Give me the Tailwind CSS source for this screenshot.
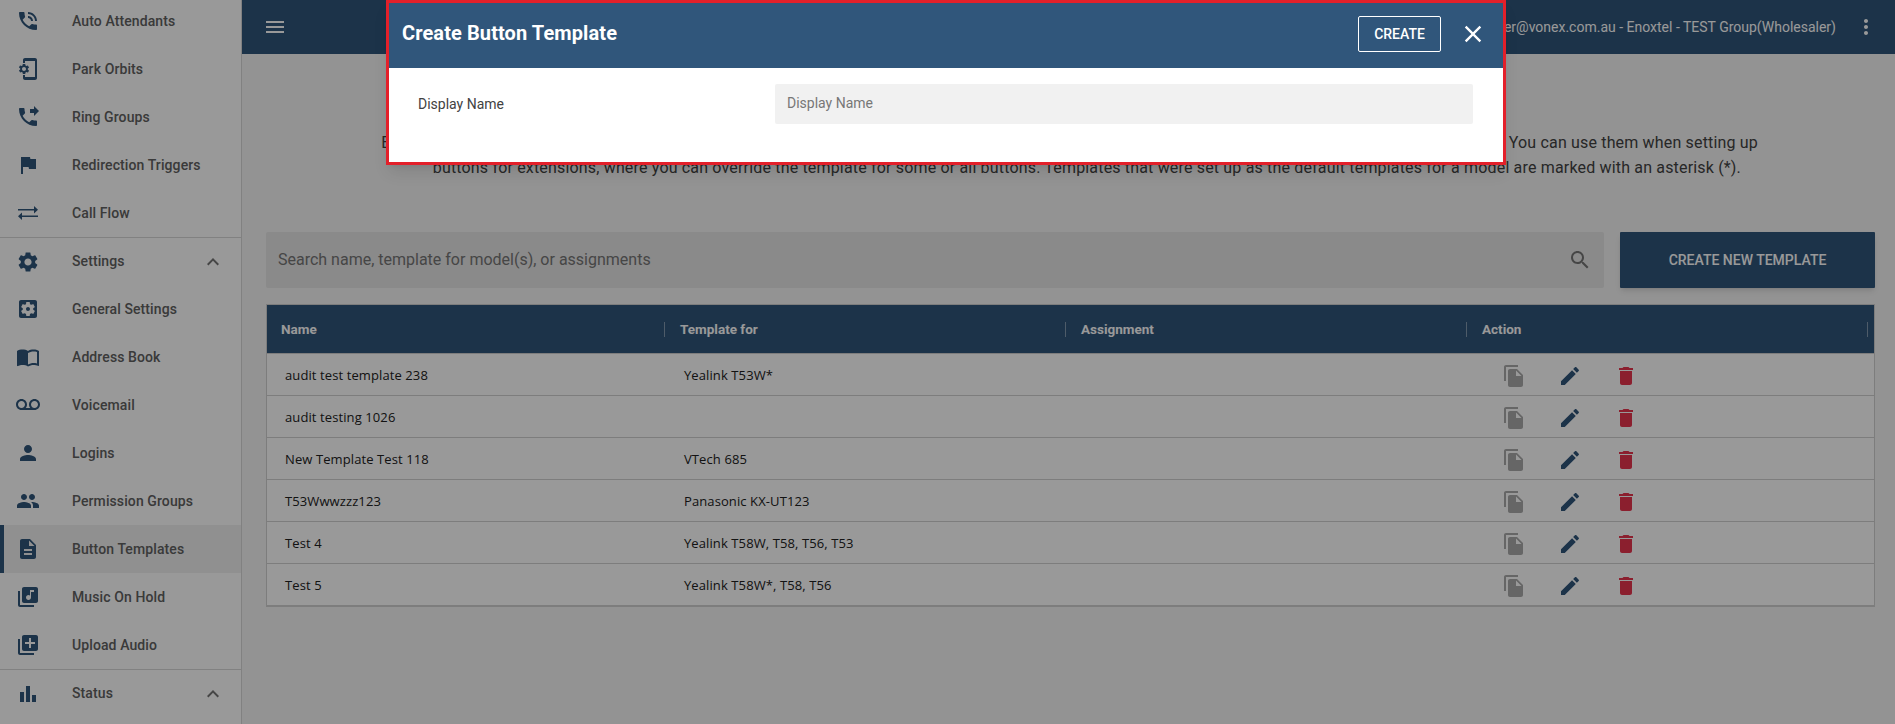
<!DOCTYPE html>
<html lang="en">
<head>
<meta charset="utf-8">
<title>Button Templates</title>
<script src="https://cdn.jsdelivr.net/npm/@tailwindcss/browser@4"></script>
</head>
<body class="font-['Roboto',sans-serif]">
<div class="flex h-[724px] w-full overflow-hidden bg-[#f5f5f5] relative">
  <aside class="w-[242px] h-full shrink-0 bg-white border-r border-[#d8d8d8] overflow-hidden text-[14px] font-medium tracking-[0.1px] text-[#616161]">
    <nav class="-mt-[3px]">
      <a class="flex items-center h-12 pl-4"><svg viewBox="0 0 24 24" class="w-6 h-6 fill-[#30567b] mr-8"><path d="M20 15.5c-1.25 0-2.45-.2-3.57-.57-.35-.11-.74-.03-1.02.24l-2.2 2.2c-2.83-1.44-5.15-3.75-6.59-6.59l2.2-2.21c.28-.26.36-.65.25-1C8.7 6.45 8.5 5.25 8.5 4c0-.55-.45-1-1-1H4c-.55 0-1 .45-1 1 0 9.39 7.61 17 17 17 .55 0 1-.45 1-1v-3.5c0-.55-.45-1-1-1zM19 12h2c0-4.97-4.03-9-9-9v2c3.87 0 7 3.13 7 7zm-4 0h2c0-2.76-2.24-5-5-5v2c1.66 0 3 1.34 3 3z"/></svg>Auto Attendants</a>
      <a class="flex items-center h-12 pl-4"><svg viewBox="0 0 24 24" class="w-6 h-6 fill-[#30567b] mr-8"><path d="M11.8 12.5v-1l1.1-.8c.1-.1.1-.2.1-.3l-1-1.7c-.1-.1-.2-.2-.3-.1l-1.3.4c-.3-.2-.6-.4-.9-.5l-.2-1.3c0-.1-.1-.2-.3-.2H7c-.1 0-.2.1-.3.2l-.2 1.3c-.3.1-.6.3-.9.5l-1.3-.5c-.1 0-.2 0-.3.1l-1 1.7c-.1.1 0 .2.1.3l1.1.8v1l-1.1.8c-.1.2-.1.3-.1.4l1 1.7c.1.1.2.2.3.1l1.4-.4c.3.2.6.4.9.5l.2 1.3c-.1.1.1.2.2.2h2c.1 0 .2-.1.3-.2l.2-1.3c.3-.1.6-.3.9-.5l1.3.5c.1 0 .2 0 .3-.1l1-1.7c.1-.1 0-.2-.1-.3l-1.1-.9zM8 14c-1.1 0-2-.9-2-2s.9-2 2-2 2 .9 2 2-.9 2-2 2zM19 1H9c-1.1 0-2 .9-2 2v3h2V4h10v16H9v-2H7v3c0 1.1.9 2 2 2h10c1.1 0 2-.9 2-2V3c0-1.1-.9-2-2-2z"/></svg>Park Orbits</a>
      <a class="flex items-center h-12 pl-4"><svg viewBox="0 0 24 24" class="w-6 h-6 fill-[#30567b] mr-8"><path d="M18 11l5-5-5-5v3h-4v4h4v3zm2 4.5c-1.25 0-2.45-.2-3.57-.57-.35-.11-.74-.03-1.02.24l-2.2 2.2c-2.83-1.44-5.15-3.75-6.59-6.59l2.2-2.21c.28-.26.36-.65.25-1C8.7 6.45 8.5 5.25 8.5 4c0-.55-.45-1-1-1H4c-.55 0-1 .45-1 1 0 9.39 7.61 17 17 17 .55 0 1-.45 1-1v-3.5c0-.55-.45-1-1-1z"/></svg>Ring Groups</a>
      <a class="flex items-center h-12 pl-4"><svg viewBox="0 0 24 24" class="w-6 h-6 fill-[#30567b] mr-8"><path d="M14.4 6L14 4H5v17h2v-7h5.6l.4 2h7V6z"/></svg>Redirection Triggers</a>
      <a class="flex items-center h-12 pl-4"><svg viewBox="0 0 24 24" class="w-6 h-6 fill-[#30567b] mr-8"><path d="M18 5v3H2v1.6h16v3l4-3.8zM6 11.4l-4 3.8L6 19v-3h16v-1.6H6z"/></svg>Call Flow</a>
      <a class="flex items-center h-12 pl-4 pr-[16px] border-t border-[#d8d8d8]"><svg viewBox="0 0 24 24" class="w-6 h-6 fill-[#30567b] mr-8"><path d="M19.14 12.94c.04-.3.06-.61.06-.94 0-.32-.02-.64-.07-.94l2.03-1.58c.18-.14.23-.41.12-.61l-1.92-3.32c-.12-.22-.37-.29-.59-.22l-2.39.96c-.5-.38-1.03-.7-1.62-.94l-.36-2.54c-.04-.24-.24-.41-.48-.41h-3.84c-.24 0-.43.17-.47.41l-.36 2.54c-.59.24-1.13.57-1.62.94l-2.39-.96c-.22-.08-.47 0-.59.22L2.74 8.87c-.12.21-.08.47.12.61l2.03 1.58c-.05.3-.09.63-.09.94s.02.64.07.94l-2.03 1.58c-.18.14-.23.41-.12.61l1.92 3.32c.12.22.37.29.59.22l2.39-.96c.5.38 1.03.7 1.62.94l.36 2.54c.05.24.24.41.48.41h3.84c.24 0 .44-.17.47-.41l.36-2.54c.59-.24 1.13-.56 1.62-.94l2.39.96c.22.08.47 0 .59-.22l1.92-3.32c.12-.22.07-.47-.12-.61l-2.01-1.58zM12 15.6c-1.98 0-3.6-1.62-3.6-3.6s1.62-3.6 3.6-3.6 3.6 1.62 3.6 3.6-1.62 3.6-3.6 3.6z"/></svg><span class="flex-1">Settings</span><svg viewBox="0 0 24 24" class="w-6 h-6 fill-[#757575]"><path d="M12 8l-6 6 1.41 1.41L12 10.83l4.59 4.58L18 14z"/></svg></a>
      <a class="flex items-center h-12 pl-4"><svg viewBox="0 0 24 24" class="w-6 h-6 fill-[#30567b] mr-8"><path d="M12 10c-1.1 0-2 .9-2 2s.9 2 2 2 2-.9 2-2-.9-2-2-2zm7-7H5c-1.11 0-2 .9-2 2v14c0 1.1.89 2 2 2h14c1.11 0 2-.9 2-2V5c0-1.1-.89-2-2-2zm-1.75 9c0 .23-.02.46-.05.68l1.48 1.16c.13.11.17.3.08.45l-1.4 2.42c-.09.15-.27.21-.43.15l-1.74-.7c-.36.28-.76.51-1.18.69l-.26 1.85c-.03.17-.18.3-.35.3h-2.8c-.17 0-.32-.13-.35-.29l-.26-1.85c-.43-.18-.82-.41-1.18-.69l-1.74.7c-.16.06-.34 0-.43-.15l-1.4-2.42c-.09-.15-.05-.34.08-.45l1.48-1.16c-.03-.23-.05-.46-.05-.69 0-.23.02-.46.05-.68l-1.48-1.16c-.13-.11-.17-.3-.08-.45l1.4-2.42c.09-.15.27-.21.43-.15l1.74.7c.36-.28.76-.51 1.18-.69l.26-1.85c.03-.17.18-.3.35-.3h2.8c.17 0 .32.13.35.29l.26 1.85c.43.18.82.41 1.18.69l1.74-.7c.16-.06.34 0 .43.15l1.4 2.42c.09.15.05.34-.08.45l-1.48 1.16c.03.23.05.46.05.69z"/></svg>General Settings</a>
      <a class="flex items-center h-12 pl-4"><svg viewBox="0 0 24 24" class="w-6 h-6 fill-[#30567b] mr-8"><path d="M21 5c-1.11-.35-2.33-.5-3.5-.5-1.95 0-4.05.4-5.5 1.5-1.45-1.1-3.55-1.5-5.5-1.5S2.45 4.9 1 6v14.65c0 .25.25.5.5.5.1 0 .15-.05.25-.05C3.1 20.45 5.05 20 6.5 20c1.95 0 4.05.4 5.5 1.5 1.35-.85 3.8-1.5 5.5-1.5 1.65 0 3.35.3 4.75 1.05.1.05.15.05.25.05.25 0 .5-.25.5-.5V6c-.6-.45-1.25-.75-2-1zm0 13.5c-1.1-.35-2.3-.5-3.5-.5-1.7 0-4.15.65-5.5 1.5V8c1.35-.85 3.8-1.5 5.5-1.5 1.2 0 2.4.15 3.5.5v11.5z"/></svg>Address Book</a>
      <a class="flex items-center h-12 pl-4"><svg viewBox="0 0 24 24" class="w-6 h-6 fill-[#30567b] mr-8"><path d="M18.5 6C15.46 6 13 8.46 13 11.5c0 1.33.47 2.55 1.26 3.5H9.74c.79-.95 1.26-2.17 1.26-3.5C11 8.46 8.54 6 5.5 6S0 8.46 0 11.5 2.46 17 5.5 17h13c3.04 0 5.5-2.46 5.5-5.5S21.54 6 18.5 6zm-13 9C3.57 15 2 13.43 2 11.5S3.57 8 5.5 8 9 9.57 9 11.5 7.43 15 5.5 15zm13 0c-1.93 0-3.5-1.57-3.5-3.5S16.57 8 18.5 8 22 9.57 22 11.5 20.43 15 18.5 15z"/></svg>Voicemail</a>
      <a class="flex items-center h-12 pl-4"><svg viewBox="0 0 24 24" class="w-6 h-6 fill-[#30567b] mr-8"><path d="M12 12c2.21 0 4-1.79 4-4s-1.79-4-4-4-4 1.79-4 4 1.79 4 4 4zm0 2c-2.67 0-8 1.34-8 4v2h16v-2c0-2.66-5.33-4-8-4z"/></svg>Logins</a>
      <a class="flex items-center h-12 pl-4"><svg viewBox="0 0 24 24" class="w-6 h-6 fill-[#30567b] mr-8"><path d="M16 11c1.66 0 2.99-1.34 2.99-3S17.66 5 16 5c-1.66 0-3 1.34-3 3s1.34 3 3 3zm-8 0c1.66 0 2.99-1.34 2.99-3S9.66 5 8 5C6.34 5 5 6.34 5 8s1.34 3 3 3zm0 2c-2.33 0-7 1.17-7 3.5V19h14v-2.5c0-2.33-4.67-3.5-7-3.5zm8 0c-.29 0-.62.02-.97.05 1.16.84 1.97 1.97 1.97 3.45V19h6v-2.5c0-2.33-4.67-3.5-7-3.5z"/></svg>Permission Groups</a>
      <a class="flex items-center h-12 pl-[12px] border-l-4 border-[#30567b] bg-[#f0f0f0]"><svg viewBox="0 0 24 24" class="w-6 h-6 fill-[#30567b] mr-8"><path d="M14 2H6c-1.1 0-1.99.9-1.99 2L4 20c0 1.1.89 2 1.99 2H18c1.1 0 2-.9 2-2V8l-6-6zm2 16H8v-2h8v2zm0-4H8v-2h8v2zm-3-5V3.5L18.5 9H13z"/></svg>Button Templates</a>
      <a class="flex items-center h-12 pl-4"><svg viewBox="0 0 24 24" class="w-6 h-6 fill-[#30567b] mr-8"><path d="M20 2H8c-1.1 0-2 .9-2 2v12c0 1.1.9 2 2 2h12c1.1 0 2-.9 2-2V4c0-1.1-.9-2-2-2zm-2 5h-3v5.5c0 1.38-1.12 2.5-2.5 2.5S10 13.88 10 12.5s1.12-2.5 2.5-2.5c.57 0 1.08.19 1.5.51V5h4v2zM4 6H2v14c0 1.1.9 2 2 2h14v-2H4V6z"/></svg>Music On Hold</a>
      <a class="flex items-center h-12 pl-4"><svg viewBox="0 0 24 24" class="w-6 h-6 fill-[#30567b] mr-8"><path d="M4 6H2v14c0 1.1.9 2 2 2h14v-2H4V6zm16-4H8c-1.1 0-2 .9-2 2v12c0 1.1.9 2 2 2h12c1.1 0 2-.9 2-2V4c0-1.1-.9-2-2-2zm-1 9h-4v4h-2v-4H9V9h4V5h2v4h4v2z"/></svg>Upload Audio</a>
      <a class="flex items-center h-12 pl-4 pr-[16px] border-t border-[#d8d8d8]"><svg viewBox="0 0 24 24" class="w-6 h-6 fill-[#30567b] mr-8"><path d="M4 10h4v10H4zM10 4h4v16h-4zM16 13h4v7h-4z"/></svg><span class="flex-1">Status</span><svg viewBox="0 0 24 24" class="w-6 h-6 fill-[#757575]"><path d="M12 8l-6 6 1.41 1.41L12 10.83l4.59 4.58L18 14z"/></svg></a>
    </nav>
  </aside>

  <main class="flex-1 min-w-0">
    <header class="h-[54px] bg-[#30567b] flex items-center justify-between pl-[21px] pr-[17px] text-white">
      <svg viewBox="0 0 24 24" class="w-6 h-6 fill-white"><path d="M3 18h18v-2H3v2zm0-5h18v-2H3v2zm0-7v2h18V6H3z"/></svg>
      <div class="flex items-center gap-[18px] text-[14px]">
        <span>superuser@vonex.com.au - Enoxtel - TEST Group(Wholesaler)</span>
        <svg viewBox="0 0 24 24" class="w-6 h-6 fill-white"><path d="M12 8c1.1 0 2-.9 2-2s-.9-2-2-2-2 .9-2 2 .9 2 2 2zm0 2c-1.1 0-2 .9-2 2s.9 2 2 2 2-.9 2-2-.9-2-2-2zm0 6c-1.1 0-2 .9-2 2s.9 2 2 2 2-.9 2-2-.9-2-2-2z"/></svg>
      </div>
    </header>
    <div class="pl-6 pr-5 pt-[76px]">
      <p class="text-right text-[16px] leading-[25px] tracking-[0.17px] text-[#424242] pr-[117px]">Button templates define how the buttons on a phone model are set out, so that the same layout can be applied again to any number of phones in the group. You can use them when setting up<br><span class="inline-block mr-[17px]">buttons for extensions, where you can override the template for some or all buttons. Templates that were set up as the default templates for a model are marked with an asterisk (*).</span></p>
      <div class="flex gap-4 mt-[52px]">
        <div class="flex-1 h-14 bg-[#e6e6e6] rounded-[2px] flex items-center justify-between pl-3 pr-[12px]">
          <span class="text-[16px] text-[#757575]">Search name, template for model(s), or assignments</span>
          <svg viewBox="0 0 24 24" class="w-6 h-6 fill-[#757575]"><path d="M15.5 14h-.79l-.28-.27C15.41 12.59 16 11.11 16 9.5 16 5.91 13.09 3 9.5 3S3 5.91 3 9.5 5.91 16 9.5 16c1.61 0 3.09-.59 4.23-1.57l.27.28v.79l5 4.99L20.49 19l-4.99-5zm-6 0C7.01 14 5 11.99 5 9.5S7.01 5 9.5 5 14 7.01 14 9.5 11.99 14 9.5 14z"/></svg>
        </div>
        <button class="w-[255px] h-14 bg-[#30567b] text-white text-[14px] font-medium shadow-md rounded-[1px]">CREATE NEW TEMPLATE</button>
      </div>
      <div class="mt-4 border border-[#d0d0d0] border-b-2 bg-white">
        <div class="grid grid-cols-[398px_401px_401px_1fr] h-[48px] bg-[#30567b] text-white text-[13.5px] font-bold items-center">
          <div class="pl-[14px] border-r border-white/40 h-[15px] leading-[15px]">Name</div>
          <div class="pl-[15px] border-r border-white/40 h-[15px] leading-[15px]">Template for</div>
          <div class="pl-[15px] border-r border-white/40 h-[15px] leading-[15px]">Assignment</div>
          <div class="pl-[15px] border-r border-white/40 h-[15px] leading-[15px] mr-[6px]">Action</div>
        </div>
        <div class="grid grid-cols-[398px_401px_401px_1fr] h-[42px] pt-[2px] items-center text-[13px] tracking-[0.1px] font-['Open_Sans',sans-serif] text-[#212121] border-t border-[#d0d0d0]">
          <div class="pl-[18px]">audit test template 238</div>
          <div class="pl-[19px]">Yealink T53W*</div>
          <div></div>
          <div class="flex items-center gap-8 pl-[35px]">
            <svg viewBox="0 0 24 24" class="w-6 h-6 fill-[#aaaaaa]"><path d="M16 1H4c-1.1 0-2 .9-2 2v14h2V3h12V1zm-1 4l6 6v10c0 1.1-.9 2-2 2H7.99C6.89 23 6 22.1 6 21l.01-14c0-1.1.89-2 1.99-2h7zm-1 7h5.5L14 6.5V12z"/></svg>
            <svg viewBox="0 0 24 24" class="w-6 h-6 fill-[#30567b]"><path d="M3 17.25V21h3.75L17.81 9.94l-3.75-3.75L3 17.25zM20.71 7.04c.39-.39.39-1.02 0-1.41l-2.34-2.34c-.39-.39-1.02-.39-1.41 0l-1.83 1.83 3.75 3.75 1.83-1.83z"/></svg>
            <svg viewBox="0 0 24 24" class="w-6 h-6 fill-[#e8344e]"><path d="M6 19c0 1.1.9 2 2 2h8c1.1 0 2-.9 2-2V7H6v12zM19 4h-3.5l-1-1h-5l-1 1H5v2h14V4z"/></svg>
          </div>
        </div>
        <div class="grid grid-cols-[398px_401px_401px_1fr] h-[42px] pt-[2px] items-center text-[13px] tracking-[0.1px] font-['Open_Sans',sans-serif] text-[#212121] border-t border-[#d0d0d0]">
          <div class="pl-[18px]">audit testing 1026</div>
          <div class="pl-[19px]"></div>
          <div></div>
          <div class="flex items-center gap-8 pl-[35px]">
            <svg viewBox="0 0 24 24" class="w-6 h-6 fill-[#aaaaaa]"><path d="M16 1H4c-1.1 0-2 .9-2 2v14h2V3h12V1zm-1 4l6 6v10c0 1.1-.9 2-2 2H7.99C6.89 23 6 22.1 6 21l.01-14c0-1.1.89-2 1.99-2h7zm-1 7h5.5L14 6.5V12z"/></svg>
            <svg viewBox="0 0 24 24" class="w-6 h-6 fill-[#30567b]"><path d="M3 17.25V21h3.75L17.81 9.94l-3.75-3.75L3 17.25zM20.71 7.04c.39-.39.39-1.02 0-1.41l-2.34-2.34c-.39-.39-1.02-.39-1.41 0l-1.83 1.83 3.75 3.75 1.83-1.83z"/></svg>
            <svg viewBox="0 0 24 24" class="w-6 h-6 fill-[#e8344e]"><path d="M6 19c0 1.1.9 2 2 2h8c1.1 0 2-.9 2-2V7H6v12zM19 4h-3.5l-1-1h-5l-1 1H5v2h14V4z"/></svg>
          </div>
        </div>
        <div class="grid grid-cols-[398px_401px_401px_1fr] h-[42px] pt-[2px] items-center text-[13px] tracking-[0.1px] font-['Open_Sans',sans-serif] text-[#212121] border-t border-[#d0d0d0]">
          <div class="pl-[18px]">New Template Test 118</div>
          <div class="pl-[19px]">VTech 685</div>
          <div></div>
          <div class="flex items-center gap-8 pl-[35px]">
            <svg viewBox="0 0 24 24" class="w-6 h-6 fill-[#aaaaaa]"><path d="M16 1H4c-1.1 0-2 .9-2 2v14h2V3h12V1zm-1 4l6 6v10c0 1.1-.9 2-2 2H7.99C6.89 23 6 22.1 6 21l.01-14c0-1.1.89-2 1.99-2h7zm-1 7h5.5L14 6.5V12z"/></svg>
            <svg viewBox="0 0 24 24" class="w-6 h-6 fill-[#30567b]"><path d="M3 17.25V21h3.75L17.81 9.94l-3.75-3.75L3 17.25zM20.71 7.04c.39-.39.39-1.02 0-1.41l-2.34-2.34c-.39-.39-1.02-.39-1.41 0l-1.83 1.83 3.75 3.75 1.83-1.83z"/></svg>
            <svg viewBox="0 0 24 24" class="w-6 h-6 fill-[#e8344e]"><path d="M6 19c0 1.1.9 2 2 2h8c1.1 0 2-.9 2-2V7H6v12zM19 4h-3.5l-1-1h-5l-1 1H5v2h14V4z"/></svg>
          </div>
        </div>
        <div class="grid grid-cols-[398px_401px_401px_1fr] h-[42px] pt-[2px] items-center text-[13px] tracking-[0.1px] font-['Open_Sans',sans-serif] text-[#212121] border-t border-[#d0d0d0]">
          <div class="pl-[18px]">T53Wwwzzz123</div>
          <div class="pl-[19px]">Panasonic KX-UT123</div>
          <div></div>
          <div class="flex items-center gap-8 pl-[35px]">
            <svg viewBox="0 0 24 24" class="w-6 h-6 fill-[#aaaaaa]"><path d="M16 1H4c-1.1 0-2 .9-2 2v14h2V3h12V1zm-1 4l6 6v10c0 1.1-.9 2-2 2H7.99C6.89 23 6 22.1 6 21l.01-14c0-1.1.89-2 1.99-2h7zm-1 7h5.5L14 6.5V12z"/></svg>
            <svg viewBox="0 0 24 24" class="w-6 h-6 fill-[#30567b]"><path d="M3 17.25V21h3.75L17.81 9.94l-3.75-3.75L3 17.25zM20.71 7.04c.39-.39.39-1.02 0-1.41l-2.34-2.34c-.39-.39-1.02-.39-1.41 0l-1.83 1.83 3.75 3.75 1.83-1.83z"/></svg>
            <svg viewBox="0 0 24 24" class="w-6 h-6 fill-[#e8344e]"><path d="M6 19c0 1.1.9 2 2 2h8c1.1 0 2-.9 2-2V7H6v12zM19 4h-3.5l-1-1h-5l-1 1H5v2h14V4z"/></svg>
          </div>
        </div>
        <div class="grid grid-cols-[398px_401px_401px_1fr] h-[42px] pt-[2px] items-center text-[13px] tracking-[0.1px] font-['Open_Sans',sans-serif] text-[#212121] border-t border-[#d0d0d0]">
          <div class="pl-[18px]">Test 4</div>
          <div class="pl-[19px]">Yealink T58W, T58, T56, T53</div>
          <div></div>
          <div class="flex items-center gap-8 pl-[35px]">
            <svg viewBox="0 0 24 24" class="w-6 h-6 fill-[#aaaaaa]"><path d="M16 1H4c-1.1 0-2 .9-2 2v14h2V3h12V1zm-1 4l6 6v10c0 1.1-.9 2-2 2H7.99C6.89 23 6 22.1 6 21l.01-14c0-1.1.89-2 1.99-2h7zm-1 7h5.5L14 6.5V12z"/></svg>
            <svg viewBox="0 0 24 24" class="w-6 h-6 fill-[#30567b]"><path d="M3 17.25V21h3.75L17.81 9.94l-3.75-3.75L3 17.25zM20.71 7.04c.39-.39.39-1.02 0-1.41l-2.34-2.34c-.39-.39-1.02-.39-1.41 0l-1.83 1.83 3.75 3.75 1.83-1.83z"/></svg>
            <svg viewBox="0 0 24 24" class="w-6 h-6 fill-[#e8344e]"><path d="M6 19c0 1.1.9 2 2 2h8c1.1 0 2-.9 2-2V7H6v12zM19 4h-3.5l-1-1h-5l-1 1H5v2h14V4z"/></svg>
          </div>
        </div>
        <div class="grid grid-cols-[398px_401px_401px_1fr] h-[42px] pt-[2px] items-center text-[13px] tracking-[0.1px] font-['Open_Sans',sans-serif] text-[#212121] border-t border-[#d0d0d0]">
          <div class="pl-[18px]">Test 5</div>
          <div class="pl-[19px]">Yealink T58W*, T58, T56</div>
          <div></div>
          <div class="flex items-center gap-8 pl-[35px]">
            <svg viewBox="0 0 24 24" class="w-6 h-6 fill-[#aaaaaa]"><path d="M16 1H4c-1.1 0-2 .9-2 2v14h2V3h12V1zm-1 4l6 6v10c0 1.1-.9 2-2 2H7.99C6.89 23 6 22.1 6 21l.01-14c0-1.1.89-2 1.99-2h7zm-1 7h5.5L14 6.5V12z"/></svg>
            <svg viewBox="0 0 24 24" class="w-6 h-6 fill-[#30567b]"><path d="M3 17.25V21h3.75L17.81 9.94l-3.75-3.75L3 17.25zM20.71 7.04c.39-.39.39-1.02 0-1.41l-2.34-2.34c-.39-.39-1.02-.39-1.41 0l-1.83 1.83 3.75 3.75 1.83-1.83z"/></svg>
            <svg viewBox="0 0 24 24" class="w-6 h-6 fill-[#e8344e]"><path d="M6 19c0 1.1.9 2 2 2h8c1.1 0 2-.9 2-2V7H6v12zM19 4h-3.5l-1-1h-5l-1 1H5v2h14V4z"/></svg>
          </div>
        </div>
      </div>
    </div>
  </main>

  <div class="absolute inset-0 bg-black/40"></div>

  <div class="absolute left-[386px] top-0 w-[1120px] border-[3px] border-[#e3202a] bg-white shadow-lg">
    <div class="h-[65px] bg-[#30567b] flex items-center justify-between pl-[13px] pr-[16px] text-white">
      <h2 class="text-[20px] font-bold tracking-[0.1px] -mt-[5px]">Create Button Template</h2>
      <div class="flex items-center gap-[18px] -mt-[3px]">
        <button class="w-[83px] h-[36px] border border-white rounded-[2px] text-[14px] font-medium">CREATE</button>
        <svg viewBox="0 0 24 24" class="w-7 h-7 fill-white"><path d="M19 6.41L17.59 5 12 10.59 6.41 5 5 6.41 10.59 12 5 17.59 6.41 19 12 13.41 17.59 19 19 17.59 13.41 12z"/></svg>
      </div>
    </div>
    <div class="h-[94px] flex pl-[29px] pr-[30px] pt-[16px]">
      <label class="w-[357px] text-[14px] text-[#424242] h-10 leading-10">Display Name</label>
      <div class="flex-1 h-10 bg-[#f1f1f1] rounded-[2px] pl-3 text-[14px] leading-[39px] text-[#777777]">Display Name</div>
    </div>
  </div>
</div>
</body>
</html>
